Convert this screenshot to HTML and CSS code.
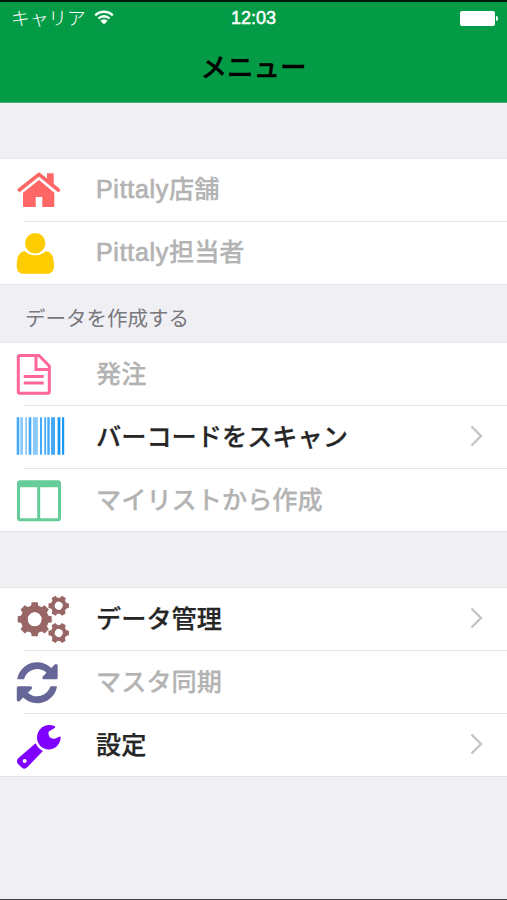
FILE: index.html
```
<!DOCTYPE html>
<html lang="ja">
  <head>
    <meta charset="UTF-8" />
    <meta name="viewport" content="width=device-width, initial-scale=1.0" />
    <title>メニュー</title>
    <link rel="stylesheet" href="styles.css">
  </head>
  <body>
    <header>
      <div class="status-bar">
        <div class="carrier">
          <span>キャリア</span>
          <svg class="wifi" width="20" height="15" viewBox="0 0 20 15">
            <path d="M1.2 5.3a12.5 12.5 0 0 1 17.6 0M4.4 8.5a8 8 0 0 1 11.2 0" fill="none" stroke="#fff" stroke-width="2.4" />
            <path d="M10 14.5L6.3 10.8a5.3 5.3 0 0 1 7.4 0z" fill="#fff" />
          </svg>
        </div>
        <div class="time">12:03</div>
        <div class="battery"><span></span></div>
      </div>
      <h1>メニュー</h1>
    </header>

    <ul class="menu first">
      <li class="disabled">
        <svg class="icon home" viewBox="0 0 60 62">
          <path d="M5.300 31L25 15.300 44.300 31" fill="none" stroke="currentColor" stroke-width="3.600" stroke-linecap="round" stroke-linejoin="round" />
          <path d="M33 14.200h6.700v12L33 20.300zM25 21L40.300 33.700V47q0 1-1 1h-11V38h-6.600v10H10q-1 0-1-1V33.700z" />
        </svg>
        <span class="label"><span class="latin">Pittaly</span>店舗</span>
      </li>
      <li class="disabled">
        <svg class="icon user" viewBox="0 0 60 62">
          <circle cx="21.2" cy="21.2" r="10.2" />
          <path d="M11 29.200c2.800 2.600 6 4 10.200 4s7.600-1.400 10.400-4c5.500 0 8.400 5 8.400 14.300 0 5.500-2.500 8.300-7 8.300H9.700c-4.500 0-7-2.800-7-8.300 0-9.300 2.900-14.300 8.300-14.300z" />
        </svg>
        <span class="label"><span class="latin">Pittaly</span>担当者</span>
      </li>
    </ul>

    <h2>データを作成する</h2>
    <ul class="menu">
      <li class="disabled">
        <svg class="icon order" viewBox="0 0 60 62">
          <path d="M5.600 12.400H25L35.300 23v26q0 1.300-1.300 1.300H5.600q-1.300 0-1.300-1.300V13.700q0-1.300 1.300-1.300zM22 12.400v14h13.300M9.700 33.500h20M9.700 40h20" fill="none" stroke="currentColor" stroke-width="3" />
        </svg>
        <span class="label">発注</span>
      </li>
      <li>
        <svg class="icon barcode" viewBox="0 0 60 62">
          <path d="M2.700 11.300h2.600v37.400H2.700zM14.700 11.300h2.600v37.400h-2.600zM26 11.300h2v37.400h-2zM30.300 11.300h1.800v37.400h-1.800zM33.300 11.300h2.400v37.400h-2.400zM37 11.300h4v37.400h-4z" />
          <path class="light" d="M6.300 11.300H9v37.400H6.300zM11.300 11.300H13v37.400h-1.700zM19 11.300h4.800v37.400H19z" />
          <path class="strong" d="M43.600 11.300h2.800v37.400h-2.800zM48 11.300h2.200v37.400H48z" />
        </svg>
        <span class="label">バーコードをスキャン</span>
        <svg class="chevron" viewBox="0 0 13 22"><path d="M1.500 1.500L11 11l-9.500 9.500" /></svg>
      </li>
      <li class="disabled">
        <svg class="icon list" viewBox="0 0 60 62">
          <path fill-rule="evenodd" d="M6 11.300h38q3 0 3 3v35q0 3-3 3H6q-3 0-3-3v-35q0-3 3-3zM6 18.300v31h17.200v-31zM26.200 18.300v31H44v-31z" />
        </svg>
        <span class="label">マイリストから作成</span>
      </li>
    </ul>

    <ul class="menu last">
      <li>
        <svg class="icon gears" viewBox="0 0 60 62">
          <defs>
            <g id="gear-large">
              <circle r="10.500" fill="none" stroke="currentColor" stroke-width="6.600" />
              <path d="M-4-12l1-5h6l1 5zM-4 12l1 5h6l1-5zM-12-4l-5 1v6l5 1zM12-4l5 1v6l-5 1z" />
            </g>
            <g id="gear-small">
              <circle r="6" fill="none" stroke="currentColor" stroke-width="4" />
              <path id="teeth" d="M-3-7l.8-3.200h4.400L3-7zM-3 7l.8 3.200h4.400L3 7z" />
              <use href="#teeth" transform="rotate(60)" />
              <use href="#teeth" transform="rotate(120)" />
            </g>
          </defs>
          <use href="#gear-large" transform="translate(20.700 31.300)" />
          <use href="#gear-large" transform="translate(20.700 31.300) rotate(45)" />
          <use href="#gear-small" transform="translate(44.700 17.700) rotate(30)" />
          <use href="#gear-small" transform="translate(44.700 45) rotate(30)" />
        </svg>
        <span class="label">データ管理</span>
        <svg class="chevron" viewBox="0 0 13 22"><path d="M1.500 1.500L11 11l-9.500 9.500" /></svg>
      </li>
      <li class="disabled">
        <svg class="icon sync" viewBox="0 0 60 62">
          <path transform="translate(2.800 11.300) scale(.0266)" d="M1511 928q0 5-1 7-64 268-268 434.500T764 1536q-146 0-282.500-55T238 1324l-129 129q-19 19-45 19t-45-19-19-45V960q0-26 19-45t45-19h448q26 0 45 19t19 45-19 45l-137 137q71 66 161 102t187 36q134 0 250-65t186-179q11-17 53-117 8-23 30-23h192q13 0 22.500 9.500t9.500 22.500zm25-800v448q0 26-19 45t-45 19h-448q-26 0-45-19t-19-45 19-45l138-138Q969 256 768 256q-134 0-250 65T332 500q-11 17-53 117-8 23-30 23H50q-13 0-22.500-9.500T18 608v-7q65-268 270-434.500T768 0q146 0 284 55.500T1297 212l130-129q19-19 45-19t45 19 19 45z" />
        </svg>
        <span class="label">マスタ同期</span>
      </li>
      <li>
        <svg class="icon wrench" viewBox="0 0 60 62">
          <path d="M40.800 12.200C32 8 23 14.500 23 23.500 23 30.500 28.500 35.500 34.500 35.500 41.500 35.500 46.600 30 46.700 23q-.2-.8-1-.5L41.500 24.500Q37.500 25.300 35.500 23q-1.800-2.500-.8-5.500l6-3.500q1.200-1 .1-1.800z" />
          <path fill-rule="evenodd" d="M21.600 29.200q2.400 5.200 7.300 7.800L13.500 53q-3.200 3.300-6.400 0L4.500 50.500q-3.200-3.200 0-6.400zM10.700 45a2 2 0 1 0 .01 0z" />
        </svg>
        <span class="label">設定</span>
        <svg class="chevron" viewBox="0 0 13 22"><path d="M1.500 1.500L11 11l-9.500 9.500" /></svg>
      </li>
    </ul>
  </body>
</html>
```
FILE: styles.css
```
* {
  box-sizing: border-box;
}
body {
  margin: 0;
  height: 900px;
  background-color: #efeff4;
  border-top: 2px solid #071a0c;
  border-bottom: 1px solid #47474a;
  font-family: "Noto Sans CJK JP", sans-serif;
  color: #262626;
  overflow: hidden;
}

/* Header */
header {
  height: 101px;
  background-color: #049b46;
  border-bottom: 1px solid #4dae76;
}
.status-bar {
  display: grid;
  grid-template-columns: 1fr auto 1fr;
  align-items: center;
  height: 32px;
  padding: 0 9px 0 11px;
  color: #fff;
}
.carrier {
  display: flex;
  align-items: center;
  gap: 8px;
  font-size: 18.7px;
  font-weight: 300;
  line-height: 30px;
}
.carrier span {
  padding-bottom: 2px;
}
.wifi {
  margin-bottom: 2px;
}
.time {
  font-family: "Liberation Sans", sans-serif;
  font-size: 18px;
  line-height: 32px;
  padding-right: 2px;
  -webkit-text-stroke: 0.5px #fff;
}
.battery {
  display: flex;
  align-items: center;
  justify-content: flex-end;
}
.battery span {
  width: 35px;
  height: 15px;
  border-radius: 2px;
  background-color: #fff;
}
.battery::after {
  content: "";
  width: 2px;
  height: 5px;
  margin-left: 1px;
  border-radius: 0 3px 3px 0;
  background-color: #fff;
}
h1 {
  margin: 0;
  color: #000;
  font-size: 26.5px;
  font-weight: 500;
  line-height: 64px;
  text-align: center;
  -webkit-text-stroke: 0.4px #000;
}

/* Menu */
h2 {
  margin: 0;
  padding-left: 25px;
  height: 57px;
  color: #77777c;
  font-size: 20.5px;
  font-weight: 400;
  line-height: 65px;
}
.menu {
  margin: 0;
  padding: 0;
  list-style: none;
  background-color: #fff;
  border-bottom: 1px solid #e2e2e6;
}
.first {
  margin-top: 55px;
}
.last {
  margin-top: 55px;
}
.menu li {
  display: flex;
  align-items: center;
  height: 63px;
  padding: 1px 24px 0 14px;
  background: linear-gradient(#e6e6e9, #e6e6e9) 24px 0 / 100% 1px no-repeat;
}
.menu li:first-child {
  background-position: 0 0;
}
.icon {
  width: 60px;
  height: 62px;
  margin-right: 22px;
  flex: none;
  fill: currentColor;
}
.label {
  flex: 1;
  padding-bottom: 3px;
  font-size: 25.2px;
  font-weight: 500;
  line-height: 59px;
  white-space: nowrap;
  -webkit-text-stroke: 0.25px currentColor;
}
.latin {
  font-family: "Liberation Sans", sans-serif;
  font-size: 25px;
  letter-spacing: 0.7px;
  -webkit-text-stroke: 0.7px currentColor;
}
.disabled .label {
  color: #b3b3b3;
}
.chevron {
  width: 13px;
  height: 22px;
  margin-bottom: 2px;
  fill: none;
  stroke: #c5c5c9;
  stroke-width: 2.4;
}

/* Icon colors */
.home {
  color: #ff6666;
}
.user {
  color: #ffcc00;
}
.order {
  color: #ff6699;
}
.barcode {
  color: #43a9f8;
}
.light {
  fill: #85c9ff;
}
.strong {
  fill: #1e98f5;
}
.list {
  color: #66cc99;
}
.gears {
  color: #996666;
}
.sync {
  color: #666699;
}
.wrench {
  color: #7f00ff;
}
```
